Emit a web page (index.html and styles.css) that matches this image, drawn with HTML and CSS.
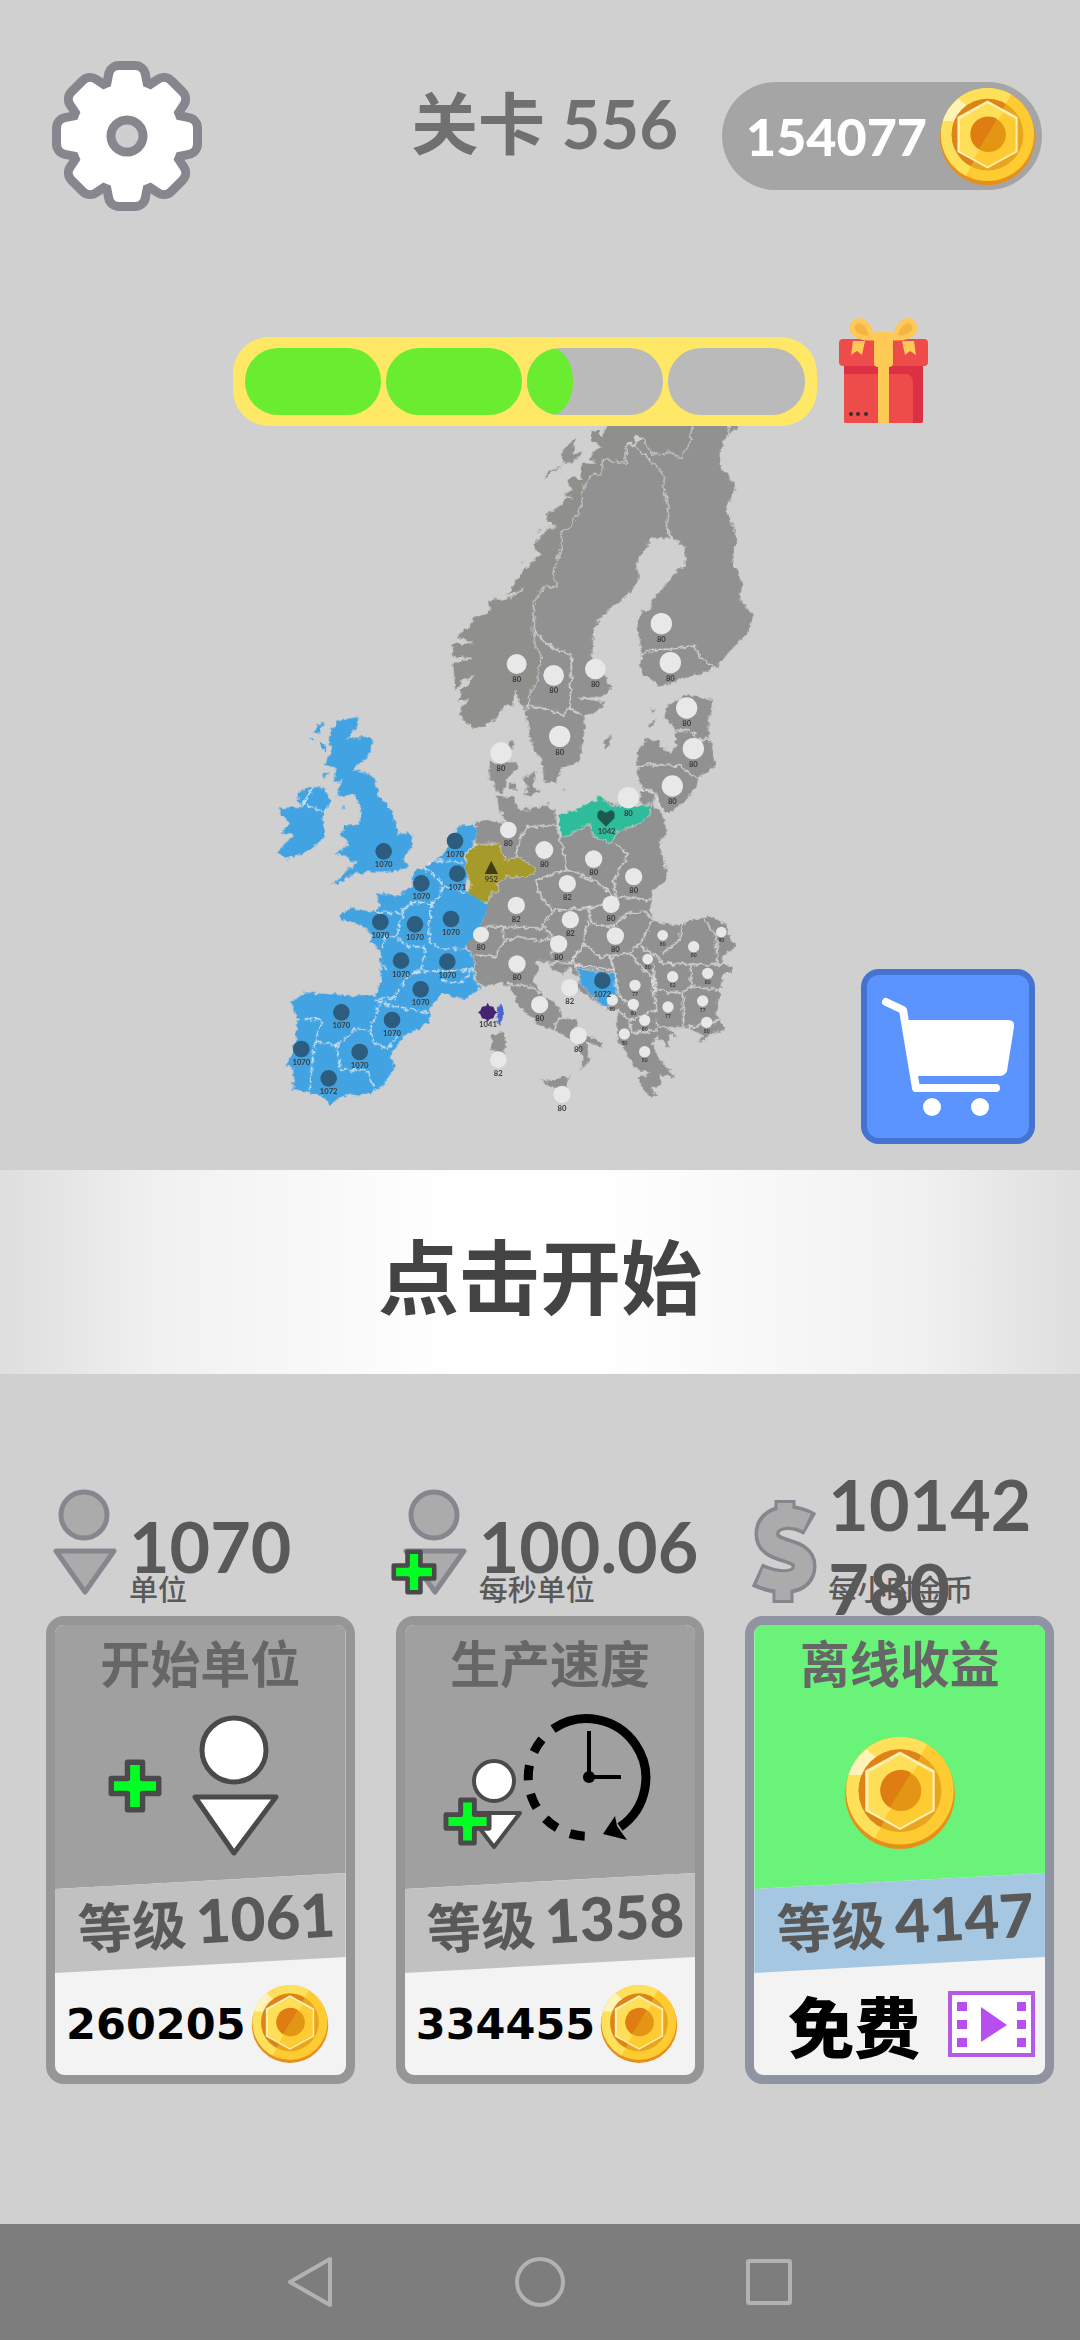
FILE: index.html
```html
<!DOCTYPE html>
<html lang="zh-CN">
<head>
    <meta charset="UTF-8">
    <meta name="viewport" content="width=device-width, initial-scale=1.0">
    <title>关卡 556</title>
    <link rel="stylesheet" href="styles.css">
</head>
<body>
    <!-- shared icons -->
    <svg class="sprite" width="0" height="0" aria-hidden="true">
        <defs>
            <clipPath id="coinLeft"><path d="M0 0H78L22 100H0Z"/></clipPath>
            <filter id="coast" x="-5%" y="-5%" width="110%" height="110%">
                <feTurbulence type="fractalNoise" baseFrequency="0.06" numOctaves="3" seed="4"/>
                <feDisplacementMap in="SourceGraphic" scale="20" xChannelSelector="R" yChannelSelector="G"/>
            </filter>
        </defs>
        <symbol id="coin" viewBox="0 0 100 100">
            <circle cx="50" cy="51" r="49" fill="#e6901c"/>
            <circle cx="50" cy="48" r="48" fill="#ffcb33"/>
            <circle cx="50" cy="48" r="48" fill="#ffe05a" clip-path="url(#coinLeft)"/>
            <path d="M4 34A48 48 0 0 1 20 11L32 21A34 34 0 0 0 16 34Z" fill="#fff3b8"/>
            <circle cx="50" cy="48" r="37" fill="#e8a51d"/>
            <circle cx="50" cy="48" r="37" fill="#dd8418" clip-path="url(#coinLeft)"/>
            <path d="M50 13L81 30V66L50 83L19 66V30Z" fill="#fff0b0"/>
            <path d="M50 16L79 32V65L50 81L22 65V32Z" fill="#ffcb33"/>
            <path d="M50 16L66 25L36 73L22 65V32Z" fill="#ffdf57"/>
            <circle cx="51" cy="48" r="18" fill="#e39614"/>
            <path d="M60 32A18 18 0 1 0 41 63Z" fill="#df7d12"/>
        </symbol>
        <symbol id="plus" viewBox="0 0 50 50">
            <path d="M18 3H32V18H47V32H32V47H18V32H3V18H18Z" fill="#0f2" stroke="#4a4a4a" stroke-width="5" stroke-linejoin="round"/>
        </symbol>
    </svg>

    <header class="top-bar">
        <button class="icon-button" type="button" aria-label="设置">
            <svg width="150" height="150" viewBox="-75 -75 150 150">
                <g fill="#86868e" stroke="#86868e" stroke-width="30" stroke-linejoin="round">
                    <circle r="46"/>
                    <path id="teeth" d="M-11 -45L-8 -60H8L11 -45ZM-11 45L-8 60H8L11 45ZM-45 -11L-60 -8V8L-45 11ZM45 -11L60 -8V8L45 11Z"/>
                    <use href="#teeth" transform="rotate(45)"/>
                </g>
                <g fill="#fff" stroke="#fff" stroke-width="12" stroke-linejoin="round">
                    <circle r="46"/>
                    <use href="#teeth"/>
                    <use href="#teeth" transform="rotate(45)"/>
                </g>
                <circle r="16" fill="#cfcfcf" stroke="#86868e" stroke-width="9"/>
            </svg>
        </button>
        <h1 class="level-title">关卡 556</h1>
        <div class="wallet">
            <span>154077</span>
            <svg width="97" height="97"><use href="#coin"/></svg>
        </div>
    </header>

    <section class="reward">
        <div class="reward-bar">
            <div class="segment"><div class="fill" style="width:100%"></div></div>
            <div class="segment"><div class="fill" style="width:100%"></div></div>
            <div class="segment"><div class="fill fill-end" style="width:34%"></div></div>
            <div class="segment"></div>
        </div>
        <svg class="gift" width="89" height="106" viewBox="0 0 89 106">
            <path d="M5 38H84V104Q84 106 82 106H7Q5 106 5 104Z" fill="#ee4b4b"/>
            <path d="M5 44H84V104Q84 106 82 106H74V66Q74 57 66 57H5Z" fill="#dc3145"/>
            <path d="M5 57H64Q73 57 73 66V106H7Q5 106 5 104Z" fill="#ee4b4b"/>
            <rect y="22" width="89" height="27" rx="4" fill="#ee4b4b"/>
            <path d="M39 49H50V106H39Z" fill="#ffc956"/>
            <path d="M33 21C15 22 10 12 15 6C22 -2 32 10 33 21ZM56 21C74 22 79 12 74 6C67 -2 57 10 56 21Z" fill="#f5b544" stroke="#ffc956" stroke-width="5"/>
            <path d="M14 24H26L23 38L18 34L12 38ZM63 24H75L77 38L71 34L66 38Z" fill="#ffc956"/>
            <rect x="35" y="15" width="19" height="35" rx="4" fill="#ffc956"/>
            <g fill="#3d2a2a"><circle cx="12" cy="97" r="2"/><circle cx="19" cy="97" r="2"/><circle cx="27" cy="97" r="2"/></g>
        </svg>
    </section>

    <main class="stage">
        <svg id="map" class="map" viewBox="30 48 1620 2184">
            <g filter="url(#coast)">
                <g class="land">
                    <!-- Norway, Sweden, Finland -->
                    <path fill="#8f8f8c" d="M1300 20L1290 100 1262 145 1228 125 1200 138 1172 128 1150 85 1130 78 1128 100 1100 100 1096 160 1030 148 1026 195 1000 190 965 240 968 280 935 350 905 362 903 425 878 490 892 530 850 530 822 580 820 660 825 705 846 735 840 760 830 820 805 860 802 905 780 885 765 845 760 890 735 890 700 935 657 958 620 945 595 910 625 870 588 880 605 840 640 797 600 820 585 850 578 760 635 745 578 740 575 700 635 698 585 680 625 650 640 625 695 600 680 575 700 565 740 570 790 535 738 560 770 505 820 450 845 430 822 425 822 400 850 370 860 350 885 350 860 335 860 310 900 290 910 265 935 262 905 255 935 240 920 215 935 200 960 205 960 165 1005 155 980 145 1020 110 990 90 990 60 1020 60 1025 80 1050 20Z"/>
                    <path d="M1120 104L1160 145 1190 165 1212 200 1212 240 1225 300 1218 345 1234 388 1205 385 1175 385 1165 410 1143 435 1130 468 1140 500 1115 545 1080 575 1050 595 1020 630 1003 660 998 745 1040 800 1055 840 1030 862 955 865 1040 875 1010 905 970 918 978 935 970 1000 955 1060 905 1075 890 1120 850 1120 845 1050 820 1020 800 935 792 905 808 895 805 860 830 820 840 760 846 735 825 705 820 660 822 580 850 530 892 530 878 490 903 425 905 362 935 350 968 280 965 240 1000 190 1026 195 1030 148 1096 160 1100 104Z"/>
                    <path d="M1300 20L1410 48 1395 95 1380 130 1385 180 1410 200 1430 235 1400 295 1432 385 1418 455 1435 480 1450 520 1435 560 1483 620 1465 665 1368 775 1320 790 1250 815 1190 832 1180 810 1145 795 1138 770 1145 735 1130 640 1145 600 1170 600 1175 570 1200 545 1250 480 1275 468 1275 410 1240 388 1218 345 1225 300 1212 240 1212 200 1190 165 1120 104 1150 85 1172 128 1200 138 1228 125 1262 145 1290 100Z"/>
                    <path d="M1412 40H1440L1430 60 1415 66 1400 90ZM905 120L950 80 940 130 968 120 940 165 905 160ZM848 212L865 180 925 162 880 185ZM1030 1000L1062 965 1045 1010 1035 1025ZM968 1065L985 1012 972 1060ZM1165 895L1190 900 1180 912ZM1162 940L1200 920 1165 960ZM830 360H850L832 370ZM775 462L790 458V466Z"/>
                </g>
                <g class="land" transform="translate(540 840)">
                    <!-- Denmark -->
                    <path d="M148 215H235L232 235 205 265 190 310 165 310 163 275 145 270ZM202 150H225L220 180 205 175ZM205 275L232 278 228 300 205 305ZM245 265L290 240 285 290 298 305 250 325 262 300ZM318 335H330L325 350ZM370 296H384L376 304Z"/>
                    <!-- Baltics -->
                    <path d="M680 45L740 15 825 28 808 90 810 145 830 225 775 265 770 295 730 340 690 368 670 365 645 310 600 290 590 240 590 190 620 145 655 155 690 190 705 170 705 120 672 80Z"/>
                    <path d="M597 297L648 312 642 345 600 345Z"/>
                    <!-- mainland -->
                    <path d="M110 390L145 388 170 398 200 395 175 360 170 315 220 320 240 360 320 345 345 360 350 420 365 440 400 365 435 345 480 318 520 340 600 345 640 345 670 370 682 430 660 460 685 560 640 605 632 660 640 690 700 705 740 695 800 675 860 700 870 740 890 770 850 800 845 820 880 830 875 850 850 855 840 910 830 975 860 1022 820 1030 770 1065 790 1035 740 1015 690 1018 720 1045 685 1035 690 1075 650 1040 640 1060 660 1110 690 1140 705 1165 660 1155 670 1185 635 1195 655 1225 615 1210 590 1165 625 1150 580 1130 560 1090 530 1050 530 960 500 960 440 915 410 900 415 865 385 830 370 860 335 835 325 815 290 815 300 840 280 870 310 920 345 935 375 985 415 990 410 1015 490 1060 490 1075 440 1055 450 1110 430 1130 410 1165 430 1110 410 1060 345 1025 290 1000 235 950 210 890 180 880 130 890 105 870 100 800 85 780 75 760 130 690 140 645 105 450Z"/>
                    <path d="M150 1040L190 1022 200 1050 190 1100 155 1080ZM295 1165L330 1170 395 1155 375 1205 330 1190Z"/>
                    <path class="land-yellow" d="M78 490L110 465 175 458 195 510 235 500 290 540 265 562 200 560 175 580 175 605 155 605 145 640 85 625 90 580 75 540Z"/>
                    <path class="land-teal" d="M352 370L390 365 435 345 480 318 510 345 630 345 635 370 600 400 530 425 515 462 460 440 450 400 365 445Z"/>
                    <path class="land-blue" d="M410 835L525 850 530 910 495 955 470 930 420 880Z"/>
                    <path fill="#4a64c8" d="M168 955L184 942 192 960 186 1000 174 1008Z"/>
                </g>
                <g class="land-blue" transform="translate(0 840)">
                    <!-- British Isles -->
                    <path d="M232 90L295 82 293 105 262 145 325 140 340 152 320 205 275 240 310 245 345 265 355 320 395 355 400 385 415 430 455 432 462 460 430 510 447 525 410 545 330 545 280 550 250 575 215 583 255 545 280 525 295 520 230 490 265 460 245 435 255 405 300 400 303 355 285 315 232 320 245 270 220 280 230 235 195 225 215 180 208 130Z"/>
                    <path d="M60 355L125 350 110 310 150 290 195 295 212 335 190 365 195 440 150 480 80 508 50 490 100 435 65 430 90 400 62 375Z"/>
                    <path d="M160 120L190 95 180 125 168 132ZM178 155L200 165 195 185ZM148 145H160V150H148ZM188 250L205 245 195 265ZM245 350L254 345 250 360Z"/>
                    <!-- France, Benelux, Iberia -->
                    <path d="M595 410L640 402 652 420 640 465 612 490 620 560 615 600 685 645 660 720 610 775 640 800 640 870 665 890 615 928 545 910 505 960 510 975 505 1000 430 1040 390 1100 405 1130 375 1180 330 1213 245 1215 210 1245 185 1215 100 1200 100 1140 80 1125 105 1060 110 985 90 935 140 908 240 915 345 920 365 870 362 790 330 750 340 735 300 705 245 690 245 665 280 655 345 668 360 640 345 610 420 615 455 590 465 540 495 530 545 500Z"/>
                </g>
                <g class="border">
                    <path d="M820 665L880 715 935 735 930 890 910 915 860 898 805 885M930 895L965 915M1145 735L1180 720 1255 715 1300 705 1320 740 1368 775"/>
                    <g transform="translate(540 840)">
                        <path d="M705 125L750 120 775 150 810 145M590 235L630 222 720 228 775 265M597 295L640 305 660 350M355 430L370 480 380 540 285 570 300 620 340 660 445 655 505 640 525 620 470 575 380 540M240 440L230 500M240 440L260 410 345 405M525 462L565 490 520 570 530 620 640 630M445 655L455 700 520 710 560 670 615 665 640 690M340 660L305 715 190 710 130 712M305 700L340 740 300 755 240 740 190 755 165 800 105 795M190 710V750M445 690L430 760 480 800 570 790 600 760 640 690M430 760L395 820 330 820M340 740L335 800M570 790L610 840 640 860 640 900 650 960M600 770L640 790 670 820 845 825M725 700L720 750 670 790M790 685L830 740V820M640 820L645 900 720 910 750 890 840 900M750 825L755 890M730 910V1010M650 960L570 990 530 960M650 990L655 1010 740 1015 840 990M570 990L575 1030 650 1020M410 825L520 840 515 800M200 880L270 890 300 910M345 1025L350 985 375 985M410 835L400 800 430 765M510 800L540 920 590 960"/>
                    </g>
                    <g class="dashed" transform="translate(0 840)">
                        <path d="M125 350L160 290 130 340 160 355 190 365M500 520L545 510 610 520M490 530L545 575V610L515 645 505 720 510 760 545 775 610 775M545 590L615 605M345 668L420 668 460 635 515 640M430 665L410 740 445 770 495 770 485 840 440 860 400 925 350 925M370 775L375 735 410 740M365 825L385 840M460 845L640 840M540 870L600 880 640 840M345 930L400 950 510 968M105 985L185 990 165 1060 155 1130 150 1200M165 1055L230 1065 240 1140M230 1065L290 1015 330 1020 360 935M330 1020L345 1060 380 1080 410 1040M240 1140H320L340 1190"/>
                    </g>
                </g>
            </g>
            <!-- special bases -->
            <g transform="translate(540 840)">
                <path d="M154 512L174 552H134Z" fill="#3f3d14"/>
                <path d="M498 410L473 385Q468 366 482 360L498 368L514 360Q528 366 523 385Z" fill="#1b5a4c"/>
                <path d="M143 938L148 948 160 950 165 962 172 967 165 973 160 985 148 988 143 997 138 988 126 985 121 973 114 967 121 962 126 950 138 948Z" fill="#45256f"/>
            </g>
            <g id="pins"></g>
        </svg>
        <button class="icon-button shop" type="button" aria-label="商店">
            <svg width="116" height="122" viewBox="0 0 116 122">
                <path d="M5 6L22 14 35 92H115" fill="none" stroke="#fff" stroke-width="8" stroke-linecap="round" stroke-linejoin="round"/>
                <path d="M24 24H127Q134 24 133 31L126 75Q124 80 118 80H36Z" fill="#fff"/>
                <circle cx="51" cy="111" r="9" fill="#fff"/>
                <circle cx="99" cy="111" r="9" fill="#fff"/>
            </svg>
        </button>
    </main>

    <button class="start" type="button">点击开始</button>

    <section class="upgrades">
        <div class="stat">
            <svg class="stat-icon" width="66" height="106" viewBox="0 0 66 106">
                <g fill="#ababab" stroke="#86868e" stroke-width="5" stroke-linejoin="round"><circle cx="32" cy="26" r="23"/><path d="M4 62H62L33 103Z"/></g>
            </svg>
            <div class="stat-text">
                <div class="value">1070</div>
                <div class="unit">单位</div>
            </div>
        </div>
        <div class="stat">
            <svg class="stat-icon" width="66" height="106" viewBox="0 0 66 106">
                <g fill="#ababab" stroke="#86868e" stroke-width="5" stroke-linejoin="round"><circle cx="32" cy="26" r="23"/><path d="M4 62H62L33 103Z"/></g>
                <use href="#plus" x="-11" y="60" width="46" height="46"/>
            </svg>
            <div class="stat-text">
                <div class="value">100.06</div>
                <div class="unit">每秒单位</div>
            </div>
        </div>
        <div class="stat">
            <svg class="stat-icon" width="66" height="106" viewBox="0 0 66 106">
                <g fill="none" stroke="#86868e" stroke-width="25" stroke-linejoin="round">
                    <path d="M59 35C40 24 16 27 16 45C16 66 53 57 53 77C53 96 28 96 6 86"/>
                    <path d="M34 11V28M32 96V114" stroke-width="21"/>
                </g>
                <g fill="none" stroke="#ababab" stroke-width="18">
                    <path d="M56 33C39 25 16 28 16 45C16 66 53 57 53 77C53 95 29 95 9 87"/>
                    <path d="M34 14V28M32 94V111" stroke-width="15"/>
                </g>
            </svg>
            <div class="stat-text">
                <div class="value">10142780</div>
                <div class="unit">每小时金币</div>
            </div>
        </div>

        <button class="card" type="button">
            <span class="card-top">
                <span class="card-title">开始单位</span>
                <span class="card-art">
                    <svg width="190" height="150" viewBox="0 2 190 150">
                        <use href="#plus" x="3" y="48" width="54" height="54"/>
                        <g fill="#fff" stroke="#4a4a4a" stroke-width="5" stroke-linejoin="round"><circle cx="129" cy="39" r="32"/><path d="M90 86H171L129 142Z"/></g>
                    </svg>
                </span>
            </span>
            <span class="card-level"><span>等级</span><b>1061</b></span>
            <span class="card-price">260205<svg width="78" height="78"><use href="#coin"/></svg></span>
        </button>

        <button class="card" type="button">
            <span class="card-top">
                <span class="card-title">生产速度</span>
                <span class="card-art">
                    <svg width="215" height="150" viewBox="-1 11 215 150">
                        <g fill="#fff" stroke="#4a4a4a" stroke-width="4" stroke-linejoin="round"><circle cx="51" cy="79" r="20"/><path d="M25 111H77L51 145Z"/></g>
                        <use href="#plus" x="0" y="95" width="49" height="49"/>
                        <g fill="none" stroke="#000" stroke-width="9">
                            <path d="M110 27A59 59 0 1 1 177 125"/>
                            <path d="M103 33A59 59 0 0 0 149 134" stroke-dasharray="15 14" stroke-dashoffset="-6"/>
                            <path d="M146 29V75H178" stroke-width="4"/>
                        </g>
                        <circle cx="146" cy="75" r="6"/>
                        <path d="M160 132L172 114 174 124 184 138Z"/>
                    </svg>
                </span>
            </span>
            <span class="card-level"><span>等级</span><b>1358</b></span>
            <span class="card-price">334455<svg width="78" height="78"><use href="#coin"/></svg></span>
        </button>

        <button class="card card-active" type="button">
            <span class="card-top">
                <span class="card-title">离线收益</span>
                <span class="card-art">
                    <svg width="112" height="112"><use href="#coin"/></svg>
                </span>
            </span>
            <span class="card-level"><span>等级</span><b>4147</b></span>
            <span class="card-price card-free">免费<svg width="87" height="66" viewBox="0 0 87 66">
                    <rect x="2" y="2" width="83" height="62" fill="#fff" stroke="#b35ae6" stroke-width="4"/>
                    <path d="M9 11H19V20H9ZM9 29H19V38H9ZM9 47H19V56H9ZM69 11H78V20H69ZM69 29H78V38H69ZM69 47H78V56H69ZM33 16L59 34L33 51Z" fill="#b94ef0"/>
                </svg></span>
        </button>
    </section>

    <nav class="system-nav">
        <button class="icon-button" type="button" aria-label="返回"><svg width="54" height="54" viewBox="0 0 54 54"><path d="M46 4V50L6 27Z"/></svg></button>
        <button class="icon-button" type="button" aria-label="主页"><svg width="54" height="54" viewBox="0 0 54 54"><circle cx="27" cy="27" r="23"/></svg></button>
        <button class="icon-button" type="button" aria-label="最近任务"><svg width="54" height="54" viewBox="0 0 54 54"><rect x="6" y="6" width="42" height="42" rx="1"/></svg></button>
    </nav>

    <script src="script.js"></script>
</body>
</html>
```

FILE: styles.css
```css
* {
    box-sizing: border-box;
}
body {
    margin: 0;
    min-height: 100vh;
    display: flex;
    flex-direction: column;
    background-color: #d0d0d0;
    font-family: Lato, "Noto Sans CJK SC", sans-serif;
    font-weight: bold;
    color: #595959;
}
svg {
    display: block;
    flex: none;
}
button {
    font: inherit;
    color: inherit;
    cursor: pointer;
}
.sprite {
    position: absolute;
}
.icon-button {
    padding: 0;
    border: none;
    background: none;
}

/* top bar */
.top-bar {
    display: flex;
    align-items: center;
    padding: 61px 38px 0 52px;
}
.level-title {
    align-self: flex-start;
    margin: 0 44px 0 auto;
    font-size: 67px;
    line-height: 124px;
    color: #707070;
}
.wallet {
    display: flex;
    align-items: center;
    justify-content: flex-end;
    gap: 12px;
    width: 320px;
    height: 108px;
    padding-right: 6px;
    border-radius: 54px;
    background: #a5a5a5;
    color: #fff;
    font-size: 52px;
    font-weight: 900;
}

/* reward progress */
.reward {
    display: flex;
    justify-content: center;
    align-items: flex-end;
    gap: 22px;
    height: 109px;
    margin-top: 106px;
    padding-left: 80px;
}
.reward-bar {
    display: flex;
    gap: 5px;
    width: 584px;
    height: 89px;
    padding: 11px 12px;
    border-radius: 36px;
    background: #ffe866;
}
.segment {
    flex: 1;
    border-radius: 33px;
    background: #bababa;
    overflow: hidden;
}
.fill {
    height: 100%;
    background: #6aec30;
}
.fill-end {
    border-radius: 0 22px 22px 0 / 0 33px 33px 0;
}
.gift {
    margin-bottom: 3px;
}

/* map */
.stage {
    display: grid;
    grid-template-columns: 1fr 540px 1fr;
    height: 744px;
}
.map {
    grid-column: 2;
    width: 540px;
    height: 728px;
}
.land {
    fill: #919191;
}
.land-blue {
    fill: #43a3e2;
}
.land-yellow {
    fill: #a59a2c;
}
.land-teal {
    fill: #2fbc9a;
}
.border {
    fill: none;
    stroke: #d8d8d8;
    stroke-width: 5;
}
.dashed {
    stroke: #d5e6f2;
    stroke-dasharray: 22 6;
}
.land path {
    stroke: #d4d4d4;
    stroke-width: 3;
}
.pin-grey {
    fill: #e8e8e8;
}
.pin-blue {
    fill: #2d5d7e;
}
.pin-label {
    fill: #3c3c3c;
    text-anchor: middle;
}
.shop {
    display: flex;
    align-items: center;
    align-self: end;
    justify-self: end;
    width: 174px;
    height: 175px;
    margin: 0 45px 26px 0;
    padding: 0 0 0 14px;
    border: 6px solid #4473d2;
    border-radius: 18px;
    background: #5b94ff;
}
.shop svg {
    overflow: visible;
}

/* start band */
.start {
    height: 204px;
    border: none;
    background: linear-gradient(90deg, #dedede, #f1f1f1 15%, #fff 42%, #fff 55%, #f1f1f1 85%, #dedede);
    color: #434343;
    font-size: 81px;
}

/* upgrades */
.upgrades {
    display: grid;
    grid-template-columns: repeat(3, 1fr);
    column-gap: 41px;
    padding: 115px 26px 0 46px;
}
.stat {
    display: flex;
    gap: 11px;
    height: 127px;
    padding-left: 6px;
}
.stat-icon {
    overflow: visible;
}
.stat-text {
    flex: 1;
    min-width: 0;
    padding-top: 15px;
}
.value {
    display: flex;
    align-items: center;
    height: 84px;
    font-size: 70px;
    line-height: 84px;
    word-break: break-all;
}
.unit {
    margin-top: -16px;
    font-size: 29px;
    line-height: 36px;
    font-weight: 500;
}
.card {
    display: flex;
    flex-direction: column;
    height: 468px;
    padding: 0;
    border: 9px solid #969696;
    border-radius: 18px;
    background: #f3f3f3;
    overflow: hidden;
}
.card-top {
    width: 100%;
    height: 264px;
    background: #a0a0a0;
    clip-path: polygon(0 0, 100% 0, 100% calc(100% - 16px), 0 100%);
}
.card-title {
    display: block;
    font-size: 50px;
    line-height: 78px;
    color: #666;
}
.card-art {
    display: flex;
    align-items: center;
    justify-content: center;
    height: 170px;
}
.card-level {
    display: flex;
    align-items: center;
    justify-content: center;
    gap: 10px;
    width: 100%;
    height: 100px;
    margin-top: -16px;
    padding-left: 12px;
    background: #c1c1c1;
    clip-path: polygon(0 16px, 100% 0, 100% 84px, 0 100%);
    font-size: 54px;
}
.card-level span,
.card-level b {
    transform: rotate(-3deg);
}
.card-level b {
    font-size: 60px;
    font-weight: 900;
    padding-bottom: 12px;
}
.card-price {
    display: flex;
    align-items: center;
    justify-content: center;
    gap: 5px;
    width: 100%;
    height: 102px;
    padding-right: 6px;
    color: #000;
    font-family: "DejaVu Sans", sans-serif;
    font-size: 43px;
}
.card-free {
    gap: 28px;
    padding: 0 0 0 24px;
    font-family: "Noto Sans CJK SC", sans-serif;
    font-size: 66px;
    font-weight: 900;
}
.card-active {
    border-color: #8f93a2;
}
.card-active .card-top {
    background: #69f378;
}
.card-active .card-art {
    padding-top: 10px;
}
.card-active .card-level {
    background: #a6c7e1;
}

/* system navigation */
.system-nav {
    display: flex;
    justify-content: center;
    align-items: center;
    gap: 175px;
    height: 116px;
    margin-top: auto;
    background: #7d7d7d;
}
.system-nav svg {
    fill: none;
    stroke: #b2b2b2;
    stroke-width: 4;
    stroke-linejoin: round;
}
```

FILE: script.js
```
// x, y, radius, army count
const greyPins = [
    [770, 762, 30, 80], [881, 796, 31, 80], [1006, 777, 31, 80], [1204, 641, 32, 80],
    [1231, 758, 32, 80], [1280, 894, 32, 80], [899, 979, 32, 80], [723, 1029, 32, 80],
    [1300, 1016, 32, 80], [1237, 1128, 32, 80], [1105, 1163, 32, 80], [745, 1260, 25, 80],
    [853, 1320, 27, 80], [1001, 1347, 26, 80], [1121, 1400, 26, 80], [922, 1421, 26, 82],
    [1053, 1483, 26, 80], [769, 1486, 26, 82], [931, 1529, 26, 82], [663, 1574, 24, 80],
    [1066, 1578, 26, 80], [896, 1602, 26, 80], [771, 1662, 26, 80], [929, 1733, 26, 82],
    [839, 1784, 26, 80], [955, 1877, 26, 80], [715, 1949, 25, 82], [906, 2053, 26, 80],
    [1208, 1576, 16, 80], [1301, 1610, 17, 80], [1384, 1566, 16, 80], [1163, 1647, 16, 80],
    [1238, 1700, 17, 82], [1343, 1690, 17, 80], [1125, 1726, 17, 77], [1057, 1770, 17, 80],
    [1120, 1783, 17, 80], [1224, 1791, 17, 77], [1328, 1773, 17, 77], [1154, 1831, 17, 80],
    [1340, 1837, 17, 80], [1093, 1872, 17, 80], [1154, 1925, 17, 80]
];
const bluePins = [
    [371, 1324, 25, 1070], [585, 1293, 25, 1070], [592, 1391, 25, 1071], [484, 1420, 25, 1070],
    [361, 1536, 25, 1070], [465, 1543, 25, 1070], [573, 1527, 25, 1070], [423, 1652, 25, 1070],
    [562, 1655, 25, 1070], [482, 1738, 25, 1070], [244, 1807, 25, 1070], [396, 1830, 25, 1070],
    [124, 1917, 25, 1070], [299, 1926, 25, 1070], [206, 2005, 25, 1072], [1027, 1712, 25, 1072]
];

const pins = document.getElementById('pins');

function addLabel(x, y, size, count) {
    pins.innerHTML += `<text class="pin-label" x="${x}" y="${y}" font-size="${size}">${count}</text>`;
}

function addPin(pin, className) {
    const [x, y, r, count] = pin;
    const size = r < 20 ? 15 : 23;
    pins.innerHTML += `<circle class="${className}" cx="${x}" cy="${y}" r="${r}"/>`;
    addLabel(x, y + r + size, size, count);
}

greyPins.forEach(pin => addPin(pin, 'pin-grey'));
bluePins.forEach(pin => addPin(pin, 'pin-blue'));

// counts under the special bases
addLabel(694, 1417, 23, 952);
addLabel(1040, 1271, 23, 1042);
addLabel(684, 1851, 23, 1041);
```
